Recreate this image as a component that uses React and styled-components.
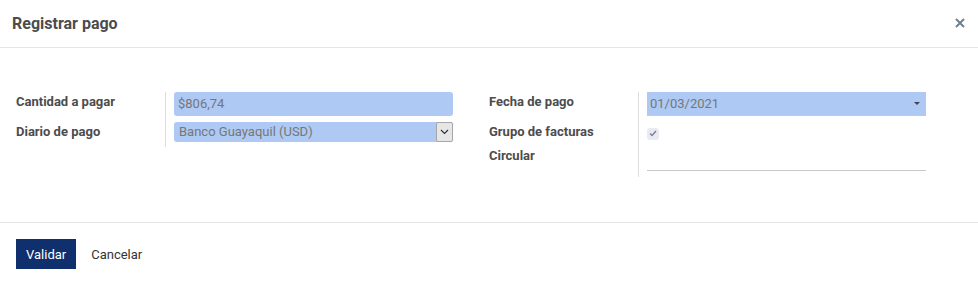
import React from "react";
import styled, { createGlobalStyle } from "styled-components";

const Global = createGlobalStyle`
  html, body { margin: 0; padding: 0; background: #fff; }
  body { font-family: Roboto, "Noto Sans", sans-serif; color: #4c4c4c; }
  * { box-sizing: border-box; }
`;

const Modal = styled.div`
  width: 978px;
  height: 290px;
  background: #fff;
  display: flex;
  flex-direction: column;
`;

const Header = styled.div`
  height: 48px;
  border-bottom: 1px solid #e6e6e6;
  display: flex;
  align-items: center;
  justify-content: space-between;
  padding: 0 12px 0 12px;
`;

const Title = styled.h4`
  margin: 0;
  font-size: 16px;
  font-weight: 700;
  color: #4c4c4c;
  padding-bottom: 1px;
`;

const Close = styled.button`
  border: 0;
  background: transparent;
  padding: 0;
  width: 12px;
  height: 12px;
  display: flex;
  align-items: center;
  justify-content: center;
  cursor: pointer;
  margin-bottom: 2px;
`;

const Body = styled.div`
  flex: 1;
  padding: 44px 16px 0 16px;
  display: grid;
  grid-template-columns: 1fr 1fr;
  border-bottom: 1px solid #e6e6e6;
`;

const Group = styled.div`
  display: grid;
  grid-template-columns: 150px 1fr;
  padding-right: 36px;
  align-content: start;
`;

const Label = styled.div`
  font-size: 13px;
  font-weight: 700;
  color: #4c4c4c;
  line-height: 20px;
  height: ${(p) => p.$h}px;
  border-right: 1px solid #dcdcdc;
`;

const Cell = styled.div`
  height: ${(p) => p.$h}px;
  padding-left: 8px;
`;

const TextInput = styled.div`
  height: 24px;
  background: #adc9f4;
  border-radius: 3px;
  font-size: 13px;
  color: #777;
  line-height: 24px;
  padding-left: 4px;
`;

const Select = styled.div`
  height: 20px;
  background: #adc9f4;
  border-radius: 3px;
  font-size: 13px;
  color: #777;
  line-height: 19px;
  padding-left: 5px;
  display: flex;
  justify-content: space-between;
`;

const SelectBtn = styled.span`
  width: 17px;
  height: 20px;
  background: #e6e6e6;
  border: 1px solid #a6a6a6;
  border-radius: 2px;
  display: flex;
  align-items: center;
  justify-content: center;
`;

const DateInput = styled.div`
  height: 24px;
  background: #adc9f4;
  border-bottom: 1px solid #c8c8c8;
  font-size: 13px;
  color: #777;
  line-height: 24px;
  padding-left: 3px;
  padding-right: 6px;
  display: flex;
  justify-content: space-between;
  align-items: center;
`;

const Caret = styled.span`
  width: 0;
  height: 0;
  border-left: 3px solid transparent;
  border-right: 3px solid transparent;
  border-top: 3px solid #444;
`;

const Check = styled.span`
  display: inline-flex;
  margin-top: 3px;
  width: 12px;
  height: 12px;
  border-radius: 3px;
  background: #e9ebf0;
  align-items: center;
  justify-content: center;
`;

const LineInput = styled.div`
  height: 25px;
  border-bottom: 1px solid #c8c8c8;
`;

const Footer = styled.div`
  height: 67px;
  padding: 16px 16px 0 16px;
  display: flex;
  align-items: flex-start;
`;

const Btn = styled.button`
  height: 30px;
  border: 0;
  font-family: Roboto, sans-serif;
  font-size: 13px;
  padding: 0 ${(p) => (p.$primary ? 10 : 15)}px;
  background: ${(p) => (p.$primary ? "#0f306c" : "transparent")};
  color: ${(p) => (p.$primary ? "#fff" : "#333")};
  cursor: pointer;
`;

export default function App() {
  return (
    <>
      <Global />
      <Modal>
        <Header>
          <Title>Registrar pago</Title>
          <Close aria-label="close">
            <svg width="10" height="10" viewBox="0 0 10 10">
              <path d="M1 1L9 9M9 1L1 9" stroke="#6f8090" strokeWidth="2" />
            </svg>
          </Close>
        </Header>
        <Body>
          <Group>
            <Label $h={30}>Cantidad a pagar</Label>
            <Cell $h={30}>
              <TextInput>$806,74</TextInput>
            </Cell>
            <Label $h={25}>Diario de pago</Label>
            <Cell $h={25}>
              <Select>
                Banco Guayaquil (USD)
                <SelectBtn>
                  <svg width="9" height="6" viewBox="0 0 9 6">
                    <path d="M1 1L4.5 4.5L8 1" stroke="#333" strokeWidth="1.2" fill="none" />
                  </svg>
                </SelectBtn>
              </Select>
            </Cell>
          </Group>
          <Group>
            <Label $h={30}>Fecha de pago</Label>
            <Cell $h={30}>
              <DateInput>
                01/03/2021
                <Caret />
              </DateInput>
            </Cell>
            <Label $h={24}>Grupo de facturas</Label>
            <Cell $h={24}>
              <Check>
                <svg width="8" height="7" viewBox="0 0 8 7">
                  <path d="M1 3.5L3 5.5L7 1" stroke="#7c7bad" strokeWidth="1.4" fill="none" />
                </svg>
              </Check>
            </Cell>
            <Label $h={31}>Circular</Label>
            <Cell $h={31}>
              <LineInput />
            </Cell>
          </Group>
        </Body>
        <Footer>
          <Btn $primary>Validar</Btn>
          <Btn>Cancelar</Btn>
        </Footer>
      </Modal>
    </>
  );
}
